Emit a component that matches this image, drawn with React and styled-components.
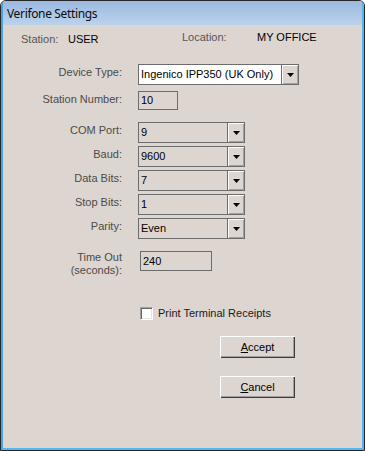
import React from "react";
import styled, { createGlobalStyle } from "styled-components";

const Global = createGlobalStyle`
  html, body { margin: 0; padding: 0; background: #ffffff; }
  body { font-family: "Liberation Sans", Arial, sans-serif; font-size: 11px; }
`;

const Window = styled.div`
  width: 365px;
  height: 451px;
  box-sizing: border-box;
  border: 1px solid #262626;
  border-radius: 6px 6px 0 0;
  overflow: hidden;
  display: flex;
  flex-direction: column;
  background: #ddd6d0;
`;

const Frame = styled.div`
  flex: 1;
  display: flex;
  flex-direction: column;
  border-left: 2px solid #4aa3e0;
  border-right: 2px solid #55b6ec;
  border-bottom: 2px solid #55b6ec;
  border-radius: 5px 5px 0 0;
`;

const TitleBar = styled.div`
  height: 24px;
  flex: none;
  display: flex;
  align-items: center;
  padding-left: 4px;
  background: linear-gradient(to bottom, #9ab9e0, #bcd2ec);
  font-family: "Noto Sans", "Open Sans", sans-serif;
  font-size: 12px;
  letter-spacing: -0.35px;
  color: #0d0d0d;
`;

const Body = styled.div`
  flex: 1;
  padding-left: 5px;
  background: #ddd6d0;
`;

const Header = styled.div`
  display: flex;
  align-items: flex-start;
  padding: 6px 0 0 13px;
  line-height: 13px;
`;

const Pair = styled.div`
  display: flex;
  width: ${(p) => (p.$width ? `${p.$width}px` : "auto")};
  padding-top: ${(p) => p.$drop || 0}px;
`;

const PairLabel = styled.span`
  width: ${(p) => p.$width}px;
  color: #555;
`;

const PairValue = styled.span`
  color: #000;
`;

const Form = styled.div`
  display: flex;
  flex-direction: column;
`;

const Row = styled.div`
  display: grid;
  grid-template-columns: 114px auto;
  column-gap: 16px;
  align-items: start;
  margin-top: ${(p) => p.$mt}px;
  line-height: 13px;
`;

const Label = styled.div`
  text-align: right;
  color: #4a4a4a;
  margin-top: ${(p) => (p.$shift === undefined ? 2 : p.$shift)}px;
`;

const Combo = styled.div`
  width: ${(p) => p.$w}px;
  height: ${(p) => p.$h}px;
  box-sizing: border-box;
  border: 1px solid #6c6c6c;
  background: ${(p) => (p.$white ? "#ffffff" : "#ddd6d0")};
  display: flex;
`;

const ComboValue = styled.div`
  flex: 1;
  display: flex;
  align-items: center;
  padding-left: 2px;
  color: #000;
`;

const ArrowButton = styled.div`
  width: 17px;
  flex: none;
  box-sizing: border-box;
  border-left: 1px solid #6c6c6c;
  background: #ddd6d0;
  box-shadow: inset 1px 1px 0 #ffffff, inset -1px -1px 0 #a8a29c;
  display: flex;
  align-items: center;
  justify-content: center;
`;

const TextBox = styled.div`
  width: ${(p) => p.$w}px;
  height: ${(p) => p.$h}px;
  margin-left: ${(p) => p.$offset || 0}px;
  box-sizing: border-box;
  border: 1px solid #6c6c6c;
  background: #ddd6d0;
  display: flex;
  align-items: center;
  padding-left: 2px;
  color: #000;
`;

const CheckRow = styled.label`
  display: flex;
  align-items: center;
  gap: 5px;
  margin-top: ${(p) => p.$mt}px;
  margin-left: 132px;
  line-height: 13px;
  color: #1a1a1a;
`;

const CheckBox = styled.span`
  width: 13px;
  height: 13px;
  box-sizing: border-box;
  background: #ffffff;
  border-top: 1px solid #a0a0a0;
  border-left: 1px solid #a0a0a0;
  border-right: 1px solid #ffffff;
  border-bottom: 1px solid #ffffff;
  box-shadow: inset 1px 1px 0 #696969, inset -1px -1px 0 #e3e3e3;
`;

const Button = styled.button`
  display: block;
  width: 75px;
  height: 22px;
  margin: ${(p) => p.$mt}px 0 0 212px;
  padding: 0;
  box-sizing: border-box;
  border: none;
  background: #ddd6d0;
  box-shadow: inset 1px 1px 0 #ffffff, inset -1px -1px 0 #3c3c3c,
    inset -2px -2px 0 #a0a0a0;
  font-family: "Liberation Sans", Arial, sans-serif;
  font-size: 11px;
  color: #000;
  u { text-decoration: underline; }
`;

const Arrow = () => (
  <svg width="7" height="4" viewBox="0 0 7 4">
    <polygon points="0,0 7,0 3.5,4" fill="#000" />
  </svg>
);

const Select = ({ value, w, h, white }) => (
  <Combo $w={w} $h={h} $white={white}>
    <ComboValue>{value}</ComboValue>
    <ArrowButton>
      <Arrow />
    </ArrowButton>
  </Combo>
);

const comPorts = [
  { label: "COM Port:", value: "9", mt: 12 },
  { label: "Baud:", value: "9600", mt: 3 },
  { label: "Data Bits:", value: "7", mt: 3 },
  { label: "Stop Bits:", value: "1", mt: 3 },
  { label: "Parity:", value: "Even", mt: 3 },
];

export default function App() {
  return (
    <>
      <Global />
      <Window>
        <Frame>
          <TitleBar>Verifone Settings</TitleBar>
          <Body>
            <Header>
              <Pair $width={161} $drop={2}>
                <PairLabel $width={47}>Station:</PairLabel>
                <PairValue>USER</PairValue>
              </Pair>
              <Pair>
                <PairLabel $width={75}>Location:</PairLabel>
                <PairValue>MY OFFICE</PairValue>
              </Pair>
            </Header>
            <Form>
              <Row $mt={18}>
                <Label>Device Type:</Label>
                <Select value="Ingenico IPP350 (UK Only)" w={161} h={21} white />
              </Row>
              <Row $mt={6}>
                <Label>Station Number:</Label>
                <TextBox $w={40} $h={19}>10</TextBox>
              </Row>
              {comPorts.map((r) => (
                <Row key={r.label} $mt={r.mt}>
                  <Label>{r.label}</Label>
                  <Select value={r.value} w={107} h={21} />
                </Row>
              ))}
              <Row $mt={12}>
                <Label $shift={0}>
                  Time Out
                  <br />
                  (seconds):
                </Label>
                <TextBox $w={72} $h={20} $offset={2}>240</TextBox>
              </Row>
              <CheckRow $mt={30}>
                <CheckBox />
                Print Terminal Receipts
              </CheckRow>
              <Button $mt={16}>
                <u>A</u>ccept
              </Button>
              <Button $mt={18}>
                <u>C</u>ancel
              </Button>
            </Form>
          </Body>
        </Frame>
      </Window>
    </>
  );
}
